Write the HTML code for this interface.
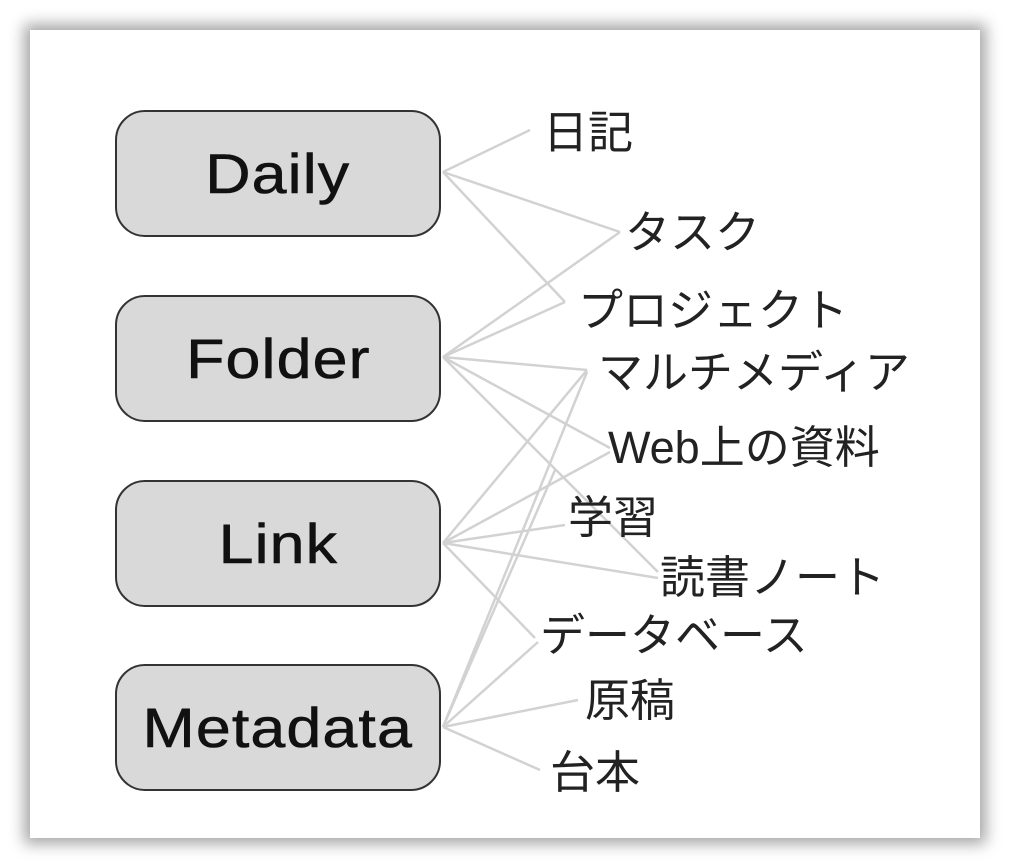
<!DOCTYPE html>
<html><head><meta charset="utf-8"><style>
html,body{margin:0;padding:0;background:#fff;}
body{width:1010px;height:867px;position:relative;overflow:hidden;font-family:"Liberation Sans","Noto Sans CJK JP",sans-serif;}
.card{position:absolute;left:30px;top:30px;width:950px;height:808px;background:#fff;box-shadow:0 0 14px 6px rgba(0,0,0,0.35);}
.box{position:absolute;left:115px;width:326px;height:127px;border:2px solid #333;border-radius:30px;background:#d9d9d9;font-size:56px;letter-spacing:1px;color:#111;display:flex;align-items:center;justify-content:center;box-sizing:border-box;}
.box span{display:inline-block;transform:scaleX(1.12);-webkit-text-stroke:0.6px #111;}
.lab{position:absolute;font-size:45px;color:#222;line-height:1;white-space:nowrap;}
svg{position:absolute;left:0;top:0;}
</style></head><body>
<div class="card"></div>
<svg width="1010" height="867"><g stroke="#d2d2d2" stroke-width="2.5" fill="none">
<line x1="443" y1="172" x2="530" y2="130"/>
<line x1="443" y1="172" x2="620" y2="232"/>
<line x1="443" y1="172" x2="565" y2="302"/>
<line x1="443" y1="357" x2="620" y2="232"/>
<line x1="443" y1="357" x2="565" y2="302"/>
<line x1="443" y1="357" x2="587" y2="370"/>
<line x1="443" y1="357" x2="610" y2="448"/>
<line x1="443" y1="357" x2="658" y2="572"/>
<line x1="443" y1="543" x2="587" y2="370"/>
<line x1="443" y1="543" x2="610" y2="452"/>
<line x1="443" y1="543" x2="565" y2="525"/>
<line x1="443" y1="543" x2="658" y2="578"/>
<line x1="443" y1="543" x2="535" y2="638"/>
<line x1="443" y1="727" x2="587" y2="372"/>
<line x1="443" y1="727" x2="555" y2="470"/>
<line x1="443" y1="727" x2="538" y2="642"/>
<line x1="443" y1="727" x2="578" y2="700"/>
<line x1="443" y1="727" x2="540" y2="770"/>
</g></svg>
<div class="box" style="top:110px"><span>Daily</span></div>
<div class="box" style="top:295px"><span>Folder</span></div>
<div class="box" style="top:480px"><span>Link</span></div>
<div class="box" style="top:664px"><span>Metadata</span></div>
<div class="lab" style="left:543px;top:110px">日記</div>
<div class="lab" style="left:625px;top:210px">タスク</div>
<div class="lab" style="left:578px;top:288px">プロジェクト</div>
<div class="lab" style="left:598px;top:350px">マルチメディア</div>
<div class="lab" style="left:608px;top:425px">Web上の資料</div>
<div class="lab" style="left:568px;top:495px">学習</div>
<div class="lab" style="left:660px;top:555px">読書ノート</div>
<div class="lab" style="left:540px;top:613px">データベース</div>
<div class="lab" style="left:585px;top:678px">原稿</div>
<div class="lab" style="left:550px;top:750px">台本</div>
</body></html>
